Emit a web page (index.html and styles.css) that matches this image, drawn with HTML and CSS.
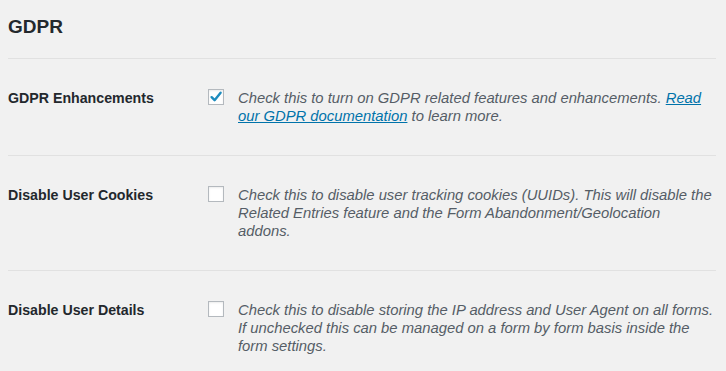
FILE: index.html
```html
<!DOCTYPE html>
<html>
<head>
<meta charset="utf-8">
<link rel="stylesheet" href="styles.css">
</head>
<body>
<div class="wrap">
  <h2 class="title">GDPR</h2>
  <div class="settings">
    <div class="row">
      <div class="label">GDPR Enhancements</div>
      <div class="field">
        <span class="cb checked"><svg viewBox="0 0 16 16" width="16" height="16"><path d="M3.6 8.2 L6.6 11.2 L12.6 3.8" fill="none" stroke="#1e8cbe" stroke-width="2.4" stroke-linecap="round" stroke-linejoin="round"/></svg></span>
        <p class="desc">Check this to turn on GDPR related features and enhancements. <a href="#">Read<br>our GDPR documentation</a> to learn more.</p>
      </div>
    </div>
    <div class="row">
      <div class="label">Disable User Cookies</div>
      <div class="field">
        <span class="cb"></span>
        <p class="desc">Check this to disable user tracking cookies (UUIDs). This will disable the<br>Related Entries feature and the Form Abandonment/Geolocation<br>addons.</p>
      </div>
    </div>
    <div class="row">
      <div class="label">Disable User Details</div>
      <div class="field">
        <span class="cb"></span>
        <p class="desc">Check this to disable storing the IP address and User Agent on all forms.<br>If unchecked this can be managed on a form by form basis inside the<br>form settings.</p>
      </div>
    </div>
  </div>
</div>
</body>
</html>
```
FILE: styles.css
```css
html, body {
  margin: 0;
  padding: 0;
  background: #f1f1f1;
}
body {
  font-family: "Liberation Sans", Arial, sans-serif;
  color: #23282d;
}
.wrap {
  padding: 0 10px 0 8px;
}
.title {
  margin: 0;
  padding: 15px 0 0;
  height: 43px;
  font-size: 19px;
  font-weight: 700;
  line-height: 24px;
  color: #23282d;
  border-bottom: 1px solid #e1e1e1;
  box-sizing: content-box;
}
.row {
  display: grid;
  grid-template-columns: 200px 1fr;
  padding: 30px 0;
  border-bottom: 1px solid #e1e1e1;
}
.label {
  font-size: 14.2px;
  font-weight: 700;
  line-height: 18px;
}
.field {
  display: flex;
  align-items: flex-start;
}
.cb {
  flex: none;
  width: 14px;
  height: 14px;
  border: 1px solid #b4b9be;
  background: #fff;
  box-shadow: inset 0 1px 2px rgba(0,0,0,0.08);
  margin-top: 0;
  margin-right: 14px;
  position: relative;
}
.cb svg {
  position: absolute;
  left: -1px;
  top: -1px;
}
.desc {
  margin: 0;
  font-size: 14.8px;
  line-height: 18px;
  font-style: italic;
  color: #555d66;
  white-space: nowrap;
}
.desc a {
  color: #0073aa;
  text-decoration: underline;
}
```
